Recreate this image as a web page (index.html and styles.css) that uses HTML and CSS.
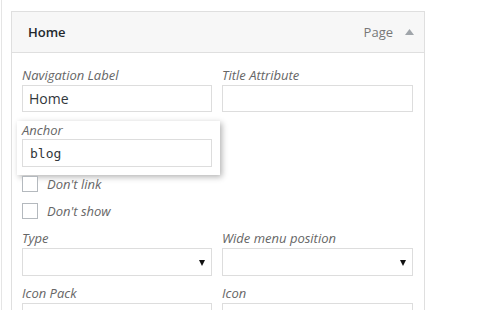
FILE: index.html
```html
<!DOCTYPE html>
<html>
<head>
  <meta charset="utf-8">
  <link rel="stylesheet" href="styles.css">
</head>
<body>
  <div class="page">
    <div class="menu-item">
      <div class="item-bar">
        <span class="item-title">Home</span>
        <span class="item-controls">
          <span class="item-type">Page</span>
          <svg class="item-toggle" width="9" height="6" viewBox="0 0 9 6"><path d="M0 6 L4.5 0 L9 6 Z" fill="#a0a5aa"/></svg>
        </span>
      </div>

      <div class="item-settings">
        <div class="field-row">
          <div class="field">
            <label>Navigation Label</label>
            <input type="text" class="text-input" value="Home">
          </div>
          <div class="field">
            <label>Title Attribute</label>
            <input type="text" class="text-input">
          </div>
        </div>

        <div class="field anchor-field">
          <label>Anchor</label>
          <input type="text" class="text-input mono" value="blog">
        </div>

        <div class="check-row">
          <span class="checkbox"></span>
          <span class="check-label">Don't link</span>
        </div>
        <div class="check-row">
          <span class="checkbox"></span>
          <span class="check-label">Don't show</span>
        </div>

        <div class="field-row">
          <div class="field">
            <label>Type</label>
            <div class="select"><span class="select-arrow"></span></div>
          </div>
          <div class="field">
            <label>Wide menu position</label>
            <div class="select"><span class="select-arrow"></span></div>
          </div>
        </div>

        <div class="field-row spaced">
          <div class="field">
            <label>Icon Pack</label>
            <div class="select"><span class="select-arrow"></span></div>
          </div>
          <div class="field">
            <label>Icon</label>
            <div class="select"><span class="select-arrow"></span></div>
          </div>
        </div>
      </div>
    </div>
  </div>
</body>
</html>
```

FILE: styles.css
```css
* {
  margin: 0;
  padding: 0;
  box-sizing: border-box;
}

body {
  width: 490px;
  height: 310px;
  overflow: hidden;
  background: #fff;
  font-family: 'Open Sans', 'Noto Sans', sans-serif;
  color: #444;
}

.page {
  margin-left: 1px;
  border-left: 1px solid #e5e5e5;
  padding: 11px 0 0 9px;
  height: 310px;
}

.menu-item {
  width: 414px;
  border: 1px solid #dfdfdf;
  background: #fff;
}

.item-bar {
  height: 41px;
  background: #f7f7f7;
  border-bottom: 1px solid #dfdfdf;
  display: flex;
  align-items: center;
  justify-content: space-between;
  padding: 0 10px 0 16px;
}

.item-title {
  font-size: 13px;
  font-weight: 600;
  color: #23282d;
}

.item-controls {
  display: flex;
  align-items: center;
  gap: 12px;
}

.item-type {
  font-size: 13px;
  color: #777;
}

.item-toggle {
  margin-top: -1px;
}

.item-settings {
  padding: 13px 11px 0 10px;
}

.field-row {
  display: flex;
  gap: 10px;
}

.field-row.spaced {
  margin-top: 8px;
}

.field {
  width: 190px;
  display: flex;
  flex-direction: column;
}

.field-row .field + .field {
  width: 191px;
}

.field label {
  font-size: 13px;
  font-style: italic;
  color: #666;
  line-height: 19px;
}

.text-input {
  width: 100%;
  height: 27px;
  border: 1px solid #ddd;
  background: #fff;
  padding: 0 6px;
  font-family: inherit;
  font-size: 14px;
  color: #32373c;
  outline: none;
}

.text-input.mono {
  height: 28px;
  font-family: 'DejaVu Sans Mono', 'Liberation Mono', monospace;
  font-size: 13px;
  padding: 0 7px;
}

.anchor-field {
  width: 203px;
  margin: 9px 0 0 -5px;
  padding: 0 8px 8px 5px;
  background: #fff;
  box-shadow: 2px 2px 6px rgba(0, 0, 0, 0.3);
}

.anchor-field label {
  line-height: 18px;
}

.check-row {
  height: 27px;
  display: flex;
  align-items: flex-start;
  padding-top: 1px;
  gap: 9px;
}

.checkbox {
  width: 16px;
  height: 16px;
  border: 1px solid #b4b9be;
  background: #fff;
}

.check-label {
  font-size: 13px;
  font-style: italic;
  color: #666;
  line-height: 16px;
}

.select {
  height: 28px;
  border: 1px solid #ddd;
  background: #fff;
  display: flex;
  align-items: center;
  justify-content: flex-end;
  padding-right: 6px;
}

.select-arrow {
  width: 0;
  height: 0;
  border-left: 3.5px solid transparent;
  border-right: 3.5px solid transparent;
  border-top: 6px solid #111;
  margin-top: 1px;
}
```
